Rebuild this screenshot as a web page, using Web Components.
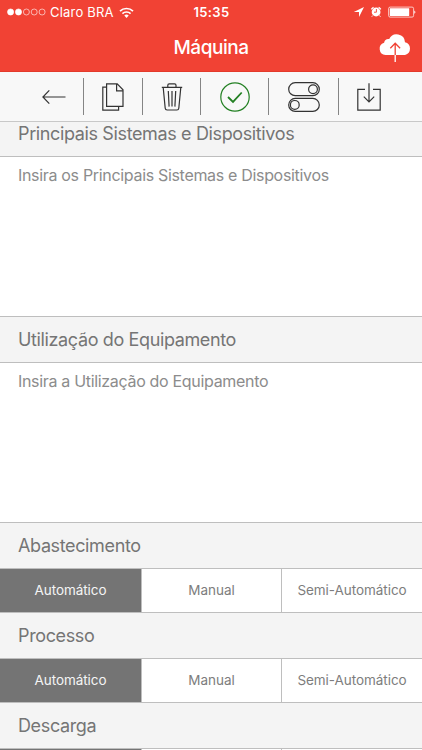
<!DOCTYPE html>
<html lang="pt-BR">
<head>
<meta charset="utf-8">
<title>Máquina</title>
<style>
    html, body {
        margin: 0;
        height: 100%;
        overflow: hidden;
        background: #fff;
        font-family: Inter, Roboto, "Liberation Sans", sans-serif;
    }
</style>
</head>
<body>
<machine-page></machine-page>

<script>
function attach(el, html) {
    var shadow = el.attachShadow({mode: "open"});
    shadow.innerHTML = html;
    return shadow;
}

class StatusBar extends HTMLElement {
    constructor() {
        super();
        attach(this, `
            <style>
                :host {
                    display: grid;
                    grid-template-columns: 1fr auto 1fr;
                    align-items: center;
                    height: 24px;
                    padding: 0 8px 0 7px;
                    color: #fff;
                }
                .left, .right { display: flex; align-items: center; }
                .right { justify-content: flex-end; }
                .carrier { font-size: 13px; letter-spacing: .2px; margin: 0 5px 0 4px; white-space: nowrap; }
                .time { font-size: 13px; font-weight: 600; letter-spacing: .35px; padding-left: 2px; }
                svg { display: block; flex: none; }
            </style>
            <div class="left">
                <svg width="39" height="8" viewBox="0 0 39 8" fill="none" stroke="#fff" stroke-width=".6">
                    <circle cx="3.6" cy="4" r="3.1" fill="#fff"/>
                    <circle cx="11.5" cy="4" r="3.1" fill="#fff"/>
                    <circle cx="19.4" cy="4" r="3"/>
                    <circle cx="27.2" cy="4" r="3"/>
                    <circle cx="35.1" cy="4" r="3"/>
                </svg>
                <span class="carrier">Claro BRA</span>
                <svg width="15" height="11" viewBox="0 0 15 11" fill="none" stroke="#fff" stroke-width="1.7">
                    <path d="M1 4.2a9.2 9.2 0 0 1 13 0M3.4 6.7a5.8 5.8 0 0 1 8.2 0"/>
                    <path d="M5.3 8.6a3.1 3.1 0 0 1 4.4 0L7.5 10.9z" fill="#fff" stroke="none"/>
                </svg>
            </div>
            <span class="time"><slot></slot></span>
            <div class="right">
                <svg width="60" height="14" viewBox="354 5 60 14" fill="none" stroke="#fff" overflow="visible">
                    <path d="M364 7L353.8 11.9H359V17z" fill="#fff" stroke="none"/>
                    <circle cx="376.1" cy="12" r="4.4" fill="#fff" stroke="none"/>
                    <path d="M371.4 9.3A5.6 5.6 0 0 1 373.6 7.3M378.6 7.3A5.6 5.6 0 0 1 380.8 9.3" stroke-width="1.3"/>
                    <path d="M372.8 15.5l-1 1.2M379.4 15.5l1 1.2" stroke-width="1"/>
                    <path d="M376.4 9v3.2H374" stroke="#f14234" stroke-width=".9"/>
                    <rect x="388.6" y="7.1" width="25" height="10" rx="1.5" stroke-width=".7"/>
                    <rect x="389.8" y="8.2" width="19.4" height="7.8" rx=".4" fill="#fff" stroke="none"/>
                    <path d="M414.3 10.4q2.2 1.6 0 3.4z" fill="#fff" stroke="none"/>
                </svg>
            </div>
        `);
    }
}
customElements.define("status-bar", StatusBar);

class NavBar extends HTMLElement {
    constructor() {
        super();
        attach(this, `
            <style>
                :host {
                    display: grid;
                    grid-template-columns: 1fr auto 1fr;
                    align-items: center;
                    height: 47px;
                    padding: 0 10px;
                    color: #fff;
                }
                h1 { grid-column: 2; margin: 0; font-size: 19px; font-weight: 500; line-height: 24px; letter-spacing: -.45px; }
                svg { display: block; justify-self: end; }
            </style>
            <h1><slot></slot></h1>
            <svg width="34" height="30" viewBox="378 32 34 30" fill="none">
                <path d="M385.5 54a6.3 6.3 0 0 1-1.4-12.3 4.6 4.6 0 0 1 5.1-3.6 8.3 8.3 0 0 1 15.8 3.1 6.6 6.6 0 0 1 0 12.8z" fill="#fff"/>
                <path d="M395.2 54V42.3M390.3 47.2l4.9-5 4.9 5" stroke="#f14234" stroke-width="1.3"/>
                <path d="M395.2 54v7" stroke="#fff" stroke-width="1.3"/>
            </svg>
        `);
    }
}
customElements.define("nav-bar", NavBar);

var ICONS = {
    back: `<svg width="24" height="16" viewBox="0 0 24 16"><path d="M23.5 8H1M7.3 1.3L.9 8l6.4 6.7"/></svg>`,
    copy: `<svg width="22" height="28" viewBox="0 0 22 28"><path d="M4.6.8h10.6l5.8 6v16.6H4.6zM14.6.8v7H21M4.6 4.2H.8v22.9h15.8v-3.7"/></svg>`,
    trash: `<svg width="22" height="28" viewBox="0 0 22 28"><path d="M.8 4.3h20.4M6.8 4.3V2.2Q6.8.8 8.2.8h5.4q1.4 0 1.4 1.4v2.1M2.2 4.5l2 20.8q.2 1.7 1.9 1.7h9.8q1.7 0 1.9-1.7l2-20.8M7.3 8l.8 15.6M11 8v15.6M14.7 8l-.8 15.6"/></svg>`,
    check: `<svg width="30" height="30" viewBox="0 0 30 30" style="stroke:#238023"><circle cx="15" cy="15" r="14.2"/><path d="M8 15l5 4.9 8.7-9.4" stroke-width="1.8"/></svg>`,
    toggles: `<svg width="32" height="30" viewBox="0 0 32 30"><rect x=".7" y=".7" width="30.6" height="13" rx="6.5"/><circle cx="25" cy="7.2" r="4.4"/><rect x=".7" y="16.4" width="30.6" height="13" rx="6.5"/><circle cx="6.8" cy="22.9" r="4.4"/></svg>`,
    download: `<svg width="24" height="28" viewBox="0 0 24 28"><path d="M8 6.3H.8v20.9h22.4V6.3H16M12 .3v18.5M6.8 13.7l5.2 5.2 5.2-5.2"/></svg>`
};

class ToolButton extends HTMLElement {
    constructor() {
        super();
        attach(this, `
            <style>
                :host { display: flex; align-items: center; justify-content: center; height: 37px; box-sizing: border-box; border-right: 1px solid #858585; }
                :host(:last-child) { border-right: none; }
                svg { display: block; fill: none; stroke: #333; stroke-width: 1.2; }
            </style>
            ${ICONS[this.getAttribute("icon")]}
        `);
    }
}
customElements.define("tool-button", ToolButton);

class ToolBar extends HTMLElement {
    constructor() {
        super();
        attach(this, `
            <style>
                :host {
                    display: grid;
                    grid-template-columns: 60px 59px 58px 68px 70px 60px;
                    align-items: center;
                    height: 49px;
                    padding-left: 24px;
                    background: #f8f8f8;
                    border-bottom: 1px solid #c8c8c8;
                }
            </style>
            <slot></slot>
        `);
    }
}
customElements.define("tool-bar", ToolBar);

class FormSection extends HTMLElement {
    constructor() {
        super();
        attach(this, `
            <style>
                :host { display: block; }
                h2 {
                    margin: 0;
                    height: 45px;
                    padding: 0 18px;
                    border: solid #bebebe;
                    border-width: 1px 0;
                    background: #f4f4f4;
                    color: #757575;
                    font-size: 18px;
                    font-weight: 400;
                    line-height: 45px;
                    letter-spacing: -.37px;
                    white-space: nowrap;
                }
            </style>
            <h2>${this.getAttribute("label")}</h2>
            <slot></slot>
        `);
    }
}
customElements.define("form-section", FormSection);

class TextField extends HTMLElement {
    constructor() {
        super();
        attach(this, `
            <style>
                :host {
                    display: block;
                    height: 159px;
                    box-sizing: border-box;
                    padding: 8px 18px;
                    color: #8c8c8c;
                    font-size: 16px;
                    line-height: 20px;
                    letter-spacing: -.32px;
                    white-space: nowrap;
                }
            </style>
            <slot></slot>
        `);
    }
}
customElements.define("text-field", TextField);

class SegmentControl extends HTMLElement {
    constructor() {
        super();
        var options = (this.getAttribute("options") || ",,").split(",");
        attach(this, `
            <style>
                :host { display: grid; grid-template-columns: 141px 140px 141px; height: 43px; background: #fff; }
                span {
                    display: flex;
                    align-items: center;
                    justify-content: center;
                    padding-bottom: 2px;
                    color: #7d7d7d;
                    font-size: 13.5px;
                    letter-spacing: -.05px;
                    white-space: nowrap;
                }
                span + span { border-left: 1px solid #bebebe; }
                .on { background: #747474; color: #f5f5f5; }
            </style>
            ${options.map((text, i) => `<span${i == 0 ? ' class="on"' : ""}>${text}</span>`).join("")}
        `);
    }
}
customElements.define("segment-control", SegmentControl);

class MachinePage extends HTMLElement {
    constructor() {
        super();
        attach(this, `
            <style>
                :host { display: flex; flex-direction: column; width: 422px; height: 750px; overflow: hidden; }
                header { flex: none; background: #f14234; border-bottom: 1px solid #e33b2c; }
                tool-bar { flex: none; }
                main { flex: 1; min-height: 0; overflow: hidden; }
                /* list is scrolled slightly under the toolbar */
                .list { margin-top: -12px; }
            </style>
            <header>
                <status-bar>15:35</status-bar>
                <nav-bar>Máquina</nav-bar>
            </header>
            <tool-bar>
                <tool-button icon="back"></tool-button>
                <tool-button icon="copy"></tool-button>
                <tool-button icon="trash"></tool-button>
                <tool-button icon="check"></tool-button>
                <tool-button icon="toggles"></tool-button>
                <tool-button icon="download"></tool-button>
            </tool-bar>
            <main>
                <div class="list">
                    <form-section label="Principais Sistemas e Dispositivos">
                        <text-field>Insira os Principais Sistemas e Dispositivos</text-field>
                    </form-section>
                    <form-section label="Utilização do Equipamento">
                        <text-field>Insira a Utilização do Equipamento</text-field>
                    </form-section>
                    <form-section label="Abastecimento">
                        <segment-control options="Automático,Manual,Semi-Automático"></segment-control>
                    </form-section>
                    <form-section label="Processo">
                        <segment-control options="Automático,Manual,Semi-Automático"></segment-control>
                    </form-section>
                    <form-section label="Descarga">
                        <segment-control></segment-control>
                    </form-section>
                </div>
            </main>
        `);
    }
}
customElements.define("machine-page", MachinePage);
</script>
</body>
</html>
